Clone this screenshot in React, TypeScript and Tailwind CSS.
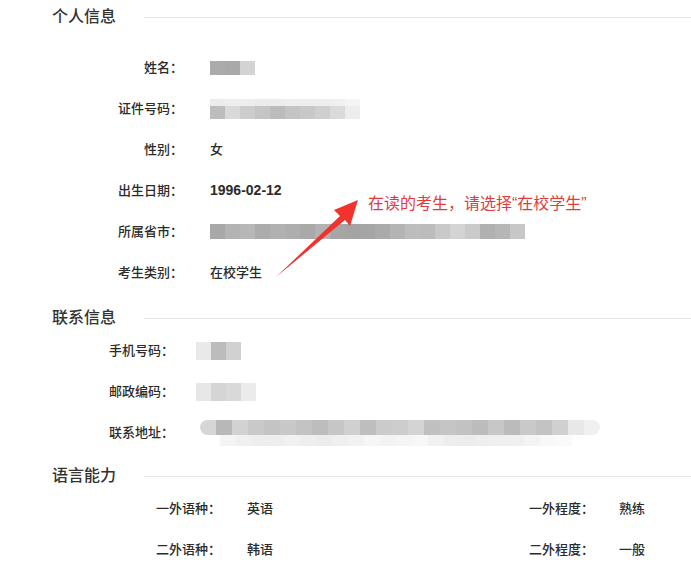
const font = "font-['Liberation_Sans','Noto_Sans_CJK_SC',sans-serif]";

function Mosaic({ shades, cell = 15, className = "" }: { shades: string[]; cell?: number; className?: string }) {
  return (
    <div className={`flex blur-[0.6px] ${className}`}>
      {shades.map((c, i) => (
        <div key={i} className="h-full" style={{ width: cell, background: c }} />
      ))}
    </div>
  );
}

function SectionTitle({ title, className = "" }: { title: string; className?: string }) {
  return (
    <div className={`flex h-6 items-center ${className}`}>
      <div className="w-[144px] shrink-0 whitespace-nowrap pl-[52px] text-[16px] font-medium text-[#333]">{title}</div>
      <div className="h-px flex-1 bg-[#e8e8e8]" />
    </div>
  );
}

function Row({ label, labelWidth, gap, children }: { label: string; labelWidth: string; gap: string; children: React.ReactNode }) {
  return (
    <div className="flex h-[41px] items-center">
      <div className={`${labelWidth} shrink-0 text-right text-[13px] font-medium text-[#2b2b2b]`}>{label}</div>
      <div className={`${gap} flex items-center text-[13px] font-medium text-[#2b2b2b]`}>{children}</div>
    </div>
  );
}

function LangRow({ a, av, b, bv }: { a: string; av: string; b: string; bv: string }) {
  return (
    <div className="flex h-[41px] items-center pl-[156px] text-[13px] font-medium text-[#2b2b2b]">
      <div className="flex w-[373px] shrink-0">
        <div className="w-[91px]">{a}</div>
        <div>{av}</div>
      </div>
      <div className="w-[90px]">{b}</div>
      <div>{bv}</div>
    </div>
  );
}

export default function App() {
  return (
    <div className={`relative h-[579px] w-[691px] overflow-hidden bg-white ${font}`}>
      {/* 个人信息 */}
      <div className="pt-[5px]">
        <SectionTitle title="个人信息" />
        <div className="mt-[18px]">
          <Row label="姓名：" labelWidth="w-[183px]" gap="pl-[27px]">
            <Mosaic className="h-[14px]" shades={["#ababab", "#a9a9a9", "#d3d3d3"]} />
          </Row>
          <Row label="证件号码：" labelWidth="w-[183px]" gap="pl-[27px]">
            <div className="flex h-[20px] flex-col">
              <Mosaic className="h-[7px] rounded-tl-full" shades={["#ececec", "#ededed", "#eeeeee", "#ebebeb", "#ececec", "#eeeeee", "#ededed", "#eeeeee", "#f0f0f0", "#f5f5f5"]} />
              <Mosaic className="h-[13px]" shades={["#bdbdbd", "#d9d9d9", "#cdcdcd", "#c5c5c5", "#bcbcbc", "#c4c4c4", "#c8c8c8", "#cfcfcf", "#dadada", "#ededed"]} />
            </div>
          </Row>
          <Row label="性别：" labelWidth="w-[183px]" gap="pl-[27px]">
            女
          </Row>
          <Row label="出生日期：" labelWidth="w-[183px]" gap="pl-[27px]">
            <span className="text-[14px] font-bold">1996-02-12</span>
          </Row>
          <Row label="所属省市：" labelWidth="w-[183px]" gap="pl-[27px]">
            <Mosaic
              className="h-[15px]"
              shades={["#a8a8a8", "#b3b3b3", "#b7b7b7", "#acacac", "#b1b1b1", "#aeaeae", "#a9a9a9", "#b2b2b2", "#a6a6a6", "#a4a4a4", "#a5a5a5", "#aaaaaa", "#b4b4b4", "#bdbdbd", "#bcbcbc", "#c9c9c9", "#d4d4d4", "#cacaca", "#b0b0b0", "#b6b6b6", "#c7c7c7"]}
            />
          </Row>
          <Row label="考生类别：" labelWidth="w-[183px]" gap="pl-[27px]">
            在校学生
          </Row>
        </div>
      </div>

      {/* 联系信息 */}
      <SectionTitle title="联系信息" className="mt-[13px]" />
      <div>
        <Row label="手机号码：" labelWidth="w-[174px]" gap="pl-[22px]">
          <Mosaic className="h-[18px] rounded-l-full" cell={15} shades={["#e9e9e9", "#bcbcbc", "#d1d1d1"]} />
        </Row>
        <Row label="邮政编码：" labelWidth="w-[174px]" gap="pl-[22px]">
          <Mosaic className="h-[18px] rounded-tl-full" cell={15} shades={["#e7e7e7", "#d5d5d5", "#d9d9d9", "#ebebeb"]} />
        </Row>
        <Row label="联系地址：" labelWidth="w-[174px]" gap="pl-[26px]">
          <div className="flex h-[26px] flex-col">
            <Mosaic
              className="h-[15px] overflow-hidden rounded-l-full rounded-r-full"
              cell={16}
              shades={["#d6d6d6", "#b8b8b8", "#d2d2d2", "#c9c9c9", "#c4c4c4", "#c8c8c8", "#c3c3c3", "#bdbdbd", "#c6c6c6", "#d0d0d0", "#bebebe", "#cbcbcb", "#cdcdcd", "#d4d4d4", "#c0c0c0", "#c5c5c5", "#c2c2c2", "#bcbcbc", "#c7c7c7", "#bbbbbb", "#c9c9c9", "#c3c3c3", "#d0d0d0", "#e8e8e8", "#f0f0f0"]}
            />
            <Mosaic
              className="ml-[20px] h-[11px] rounded-b-full"
              cell={16}
              shades={["#f4f4f4", "#f0f0f0", "#ededed", "#eeeeee", "#f1f1f1", "#eeeeee", "#ececec", "#efefef", "#f2f2f2", "#f6f6f6", "#f3f3f3", "#f5f5f5", "#f7f7f7", "#f1f1f1", "#ededed", "#ececec", "#eeeeee", "#efefef", "#f0f0f0", "#f4f4f4", "#f8f8f8", "#fafafa"]}
            />
          </div>
        </Row>
      </div>

      {/* 语言能力 */}
      <SectionTitle title="语言能力" className="mt-[11px]" />
      <div>
        <LangRow a="一外语种：" av="英语" b="一外程度：" bv="熟练" />
        <LangRow a="二外语种：" av="韩语" b="二外程度：" bv="一般" />
      </div>

      {/* annotation overlay */}
      <svg className="absolute left-0 top-0" width="691" height="579" viewBox="0 0 691 579">
        <polygon points="276,277 340,216 334,210 358,200 350,226 345,220" fill="#f2332d" />
      </svg>
      <div className="absolute left-[368px] top-[192px] text-[16px] leading-6 text-[#e13b3b]">在读的考生，请选择“在校学生”</div>
    </div>
  );
}
